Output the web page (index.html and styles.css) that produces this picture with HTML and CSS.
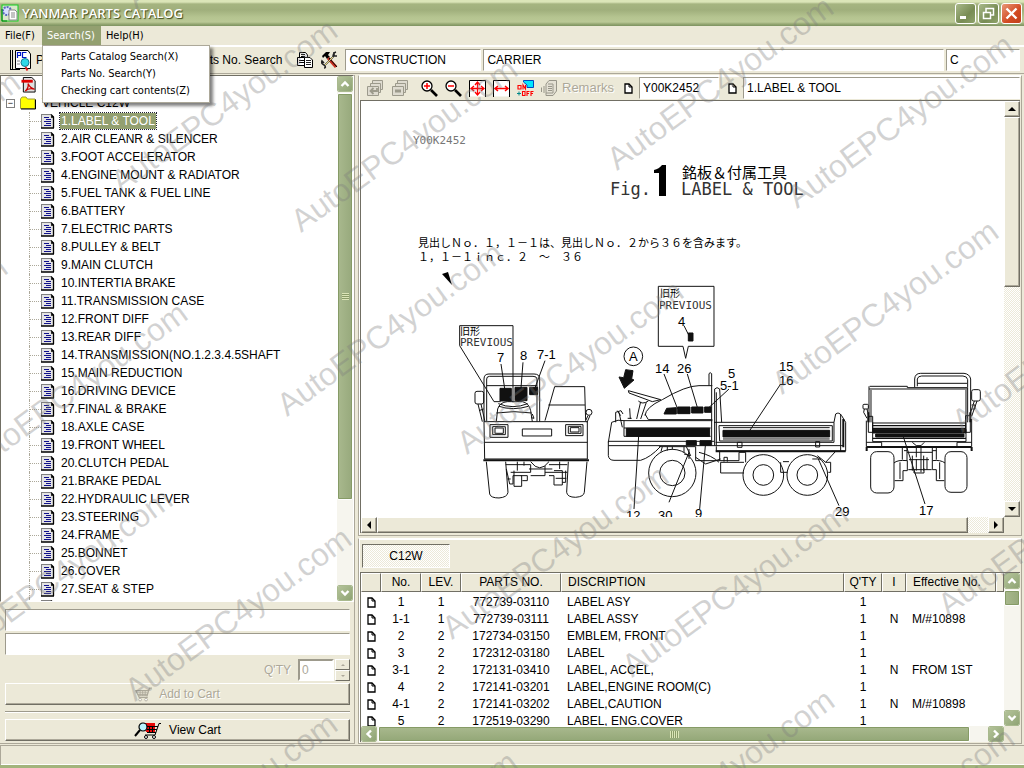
FILE: index.html
```html
<!DOCTYPE html>
<html lang="en">
<head>
<meta charset="utf-8">
<title>YANMAR PARTS CATALOG</title>
<link rel="stylesheet" href="styles.css">
</head>
<body>
<svg class="symbols" aria-hidden="true">
  <symbol id="doc" viewBox="0 0 14 15">
    <path d="M0 0H10L13 3V14H0Z" fill="#e4e4e4"/>
    <path d="M0 .5H10M.5 0V14" stroke="#808080" fill="none"/>
    <path d="M10 .5L12.500 3V14M0 14H13M10 3H13" stroke="#000" stroke-width="1.300" fill="none"/>
    <path d="M3 3.500H8M5 5.500H10M3 7.500H10M5 9.500H10M3 11.500H10" stroke="#10108c" fill="none"/>
  </symbol>
  <symbol id="page" viewBox="0 0 9 11">
    <path d="M1 1H5L8 4V10H1Z" fill="#fff" stroke="#000" stroke-width="1.300"/>
    <path d="M5 1V4H8" fill="none" stroke="#000"/>
  </symbol>
  <symbol id="up" viewBox="0 0 10 10"><path d="M1.500 7L5 3.500L8.500 7" fill="none" stroke="#fff" stroke-width="2.400"/></symbol>
  <symbol id="down" viewBox="0 0 10 10"><path d="M1.500 3L5 6.500L8.500 3" fill="none" stroke="#fff" stroke-width="2.400"/></symbol>
  <symbol id="left" viewBox="0 0 10 10"><path d="M7 1.500L3.500 5L7 8.500" fill="none" stroke="#fff" stroke-width="2.400"/></symbol>
  <symbol id="right" viewBox="0 0 10 10"><path d="M3 1.500L6.500 5L3 8.500" fill="none" stroke="#fff" stroke-width="2.400"/></symbol>
  <symbol id="cart" viewBox="0 0 20 17">
    <path d="M1 4H16L14 10H4ZM4 10L5 12H15M20 1H17L14 11" fill="none" stroke="currentColor" stroke-width="1.300"/>
    <path d="M2 6.500H15M3 8.500H14M6 4V10M9 4V10M12 4V10" stroke="currentColor" fill="none"/>
    <circle cx="6" cy="14.500" r="1.600" fill="#fff" stroke="currentColor"/><circle cx="13" cy="14.500" r="1.600" fill="#fff" stroke="currentColor"/>
  </symbol>
</svg>

<header class="titlebar">
  <svg class="app-icon" width="18" height="18" viewBox="0 0 18 18"><rect x="1" y="1" width="16" height="16" fill="#d8e8c8" stroke="#10d020"/><circle cx="6" cy="7" r="4" fill="#d8e0ff" stroke="#5868c0" stroke-width="2" stroke-dasharray="2 1"/><path d="M8 6H14L16 8V16H8Z" fill="#fff" stroke="#888"/><path d="M10 9H14M10 11H14M10 13H14" stroke="#888"/><path d="M1 5V17H6" fill="none" stroke="#008010"/></svg>
  <h1 class="title">YANMAR PARTS CATALOG</h1>
  <div class="win-buttons">
    <button class="win" aria-label="Minimize"><svg width="19" height="19" viewBox="0 0 19 19"><path d="M4 13.500H10" stroke="#fff" stroke-width="3"/></svg></button>
    <button class="win" aria-label="Restore"><svg width="19" height="19" viewBox="0 0 19 19"><path d="M7 8V4.500H14.500V11H12M4.500 8.500H11.500V14.500H4.500Z" fill="none" stroke="#fff" stroke-width="1.500"/></svg></button>
    <button class="win close" aria-label="Close"><svg width="19" height="19" viewBox="0 0 19 19"><path d="M4.500 4.500L14.500 14.500M14.500 4.500L4.500 14.500" stroke="#fff" stroke-width="2.400"/></svg></button>
  </div>
</header>

<nav class="menubar">
  <button class="menu">File(F)</button>
  <div class="menu-wrap">
    <button class="menu open" aria-expanded="true">Search(S)</button>
    <div class="popup" role="menu">
      <button role="menuitem">Parts Catalog Search(X)</button>
      <button role="menuitem">Parts No. Search(Y)</button>
      <button role="menuitem">Checking cart contents(Z)</button>
    </div>
  </div>
  <button class="menu">Help(H)</button>
</nav>

<div class="toolbar">
  <button class="tool catalog">
    <svg width="22" height="21" viewBox="0 0 22 21"><path d="M.500 0V19M2.500 0V19.500M0 19.500H10" stroke="#000" fill="none"/><path d="M5.500 .5H18L20.500 4V18.500H5.500Z" fill="#fff" stroke="#000"/><path d="M7.500 8V2.500H10.500V5.500H7.500M16.500 2.500H12.500V7.500H16.500" fill="none" stroke="#0018c8" stroke-width="1.200"/><circle cx="15" cy="12.500" r="4" fill="#30d8e8" stroke="#187890"/><path d="M15.500 17L17.500 20.500" stroke="#e02020" stroke-width="2"/><path d="M7 11H10M7 14H10" stroke="#888"/></svg>
    <span>Parts Catalog Search</span>
  </button>
  <button class="tool">Parts No. Search</button>
  <button class="tool icon" aria-label="Print"><svg width="17" height="17" viewBox="0 0 17 17"><path d="M2.500 6V.5H8.500L10.500 3V6M.5 5.500H9.500V13.500H.5Z" fill="#fff" stroke="#000"/><path d="M4 2.500H8M4 4.500H8M2 8.500H7M2 10.500H7" stroke="#000"/><path d="M7.500 5.500H13L15.500 8V15.500H7.500Z" fill="#fff" stroke="#000"/><path d="M9 8.500H14M9 10.500H14M9 12.500H14" stroke="#222"/></svg></button>
  <button class="tool icon" aria-label="Tools"><svg width="18" height="18" viewBox="0 0 18 18"><path d="M1 5L5 1L9 1L7 4L9 6L6 8L4 5L2 7Z" fill="#000"/><path d="M7 7L15 16" stroke="#c83020" stroke-width="3"/><path d="M8 7L16 16" stroke="#000"/><path d="M13 1V5L16 5M3 15L12 6Q12 2 15 1M3 14Q0 13 1 10L3 12M4 15Q5 17 3 17" fill="none" stroke="#222" stroke-width="1.600"/><path d="M4 14L12 6" stroke="#e8d878"/></svg></button>
  <div class="search-fields">
    <input aria-label="Division" value="CONSTRUCTION">
    <input aria-label="Machine" value="CARRIER">
    <input aria-label="Model" value="C">
  </div>
</div>

<main class="main">
  <section class="side">
    <div class="tree-box">
      <ul class="tree">
        <li class="root pdf"><svg width="16" height="17" viewBox="0 0 16 17"><path d="M2 .5H11L14.500 4V16H2Z" fill="#e0e0e0" stroke="#000"/><path d="M0 3H12V6H0Z" fill="#e00000"/><path d="M4 15Q8 11 7 7Q9 12 14 13Q8 11 4 15" fill="none" stroke="#c00" stroke-width="1.300"/></svg><a href="#">PDF</a></li>
        <li class="root"><button class="twist" aria-label="Collapse">−</button><svg width="16" height="13" viewBox="0 0 16 13"><path d="M.5 2.500L2 .5H6L7.500 2.500H15V12H.5Z" fill="#ff0" stroke="#a0a040"/><path d="M1 12.500H15.500V3" fill="none" stroke="#000"/></svg><a href="#">VEHICLE C12W</a></li>
        <li class="selected"><svg><use href="#doc"/></svg><a href="#">1.LABEL &amp; TOOL</a></li>
        <li><svg><use href="#doc"/></svg><a href="#">2.AIR CLEANR &amp; SILENCER</a></li>
        <li><svg><use href="#doc"/></svg><a href="#">3.FOOT ACCELERATOR</a></li>
        <li><svg><use href="#doc"/></svg><a href="#">4.ENGINE MOUNT &amp; RADIATOR</a></li>
        <li><svg><use href="#doc"/></svg><a href="#">5.FUEL TANK &amp; FUEL LINE</a></li>
        <li><svg><use href="#doc"/></svg><a href="#">6.BATTERY</a></li>
        <li><svg><use href="#doc"/></svg><a href="#">7.ELECTRIC PARTS</a></li>
        <li><svg><use href="#doc"/></svg><a href="#">8.PULLEY &amp; BELT</a></li>
        <li><svg><use href="#doc"/></svg><a href="#">9.MAIN CLUTCH</a></li>
        <li><svg><use href="#doc"/></svg><a href="#">10.INTERTIA BRAKE</a></li>
        <li><svg><use href="#doc"/></svg><a href="#">11.TRANSMISSION CASE</a></li>
        <li><svg><use href="#doc"/></svg><a href="#">12.FRONT DIFF</a></li>
        <li><svg><use href="#doc"/></svg><a href="#">13.REAR DIFF</a></li>
        <li><svg><use href="#doc"/></svg><a href="#">14.TRANSMISSION(NO.1.2.3.4.5SHAFT</a></li>
        <li><svg><use href="#doc"/></svg><a href="#">15.MAIN REDUCTION</a></li>
        <li><svg><use href="#doc"/></svg><a href="#">16.DRIVING DEVICE</a></li>
        <li><svg><use href="#doc"/></svg><a href="#">17.FINAL &amp; BRAKE</a></li>
        <li><svg><use href="#doc"/></svg><a href="#">18.AXLE CASE</a></li>
        <li><svg><use href="#doc"/></svg><a href="#">19.FRONT WHEEL</a></li>
        <li><svg><use href="#doc"/></svg><a href="#">20.CLUTCH PEDAL</a></li>
        <li><svg><use href="#doc"/></svg><a href="#">21.BRAKE PEDAL</a></li>
        <li><svg><use href="#doc"/></svg><a href="#">22.HYDRAULIC LEVER</a></li>
        <li><svg><use href="#doc"/></svg><a href="#">23.STEERING</a></li>
        <li><svg><use href="#doc"/></svg><a href="#">24.FRAME</a></li>
        <li><svg><use href="#doc"/></svg><a href="#">25.BONNET</a></li>
        <li><svg><use href="#doc"/></svg><a href="#">26.COVER</a></li>
        <li><svg><use href="#doc"/></svg><a href="#">27.SEAT &amp; STEP</a></li>
        <li><svg><use href="#doc"/></svg></li>
      </ul>
      <div class="xp-scroll vertical">
        <button class="arrow" aria-label="Scroll up"><svg><use href="#up"/></svg></button>
        <div class="thumb tree-thumb"><i class="grip"></i></div>
        <div class="spacer"></div>
        <button class="arrow" aria-label="Scroll down"><svg><use href="#down"/></svg></button>
      </div>
    </div>
    <div class="cart">
      <input class="field" aria-label="Part number">
      <input class="field" aria-label="Part name">
      <div class="qty">
        <label for="qty">Q'TY</label>
        <input id="qty" value="0" disabled>
        <div class="spin"><button disabled aria-label="Increase"><i class="tri-up"></i></button><button disabled aria-label="Decrease"><i class="tri-down"></i></button></div>
      </div>
      <button class="wide" disabled><svg width="17" height="15"><use href="#cart"/></svg>Add to Cart</button>
      <hr>
      <button class="wide"><svg width="28" height="17" viewBox="0 0 28 17"><path d="M10 1H21V10H12Z" fill="#e80808"/><path d="M12 4.500H24M13 7.500H23M13 10.500H22M27 1.500H25L21 13H11M15.500 4V11M18.500 4V11" fill="none" stroke="#000"/><circle cx="12" cy="15" r="1.500" fill="#fff" stroke="#000"/><circle cx="20" cy="15" r="1.500" fill="#fff" stroke="#000"/><path d="M1 14L6 8" stroke="#000" stroke-width="2"/><circle cx="9" cy="5" r="4" fill="#b8f4ff" stroke="#000" stroke-width="1.200"/></svg>View Cart</button>
    </div>
  </section>

  <div class="content">
    <section class="viewer">
      <div class="view-tools">
        <div class="icons">
          <button disabled aria-label="Previous figure"><svg width="17" height="17" viewBox="0 0 17 17"><path d="M5.500 3V.5H15.500V9.500H13M3.500 6V3.500H13.500V12.500H11.500M.5 6.500H11.500V15.500H.5Z" fill="#dedbd0" stroke="#9c9a8c"/><path d="M10 8V11H4M6.500 8L3.500 11L6.500 14" fill="none" stroke="#9c9a8c" stroke-width="1.800"/></svg></button>
          <button disabled aria-label="Next figure"><svg width="17" height="17" viewBox="0 0 17 17"><path d="M5.500 3V.5H15.500V9.500H13M3.500 6V3.500H13.500V12.500H11.500M.5 6.500H11.500V15.500H.5Z" fill="#dedbd0" stroke="#9c9a8c"/><path d="M3 11H9" stroke="#9c9a8c" stroke-width="3"/></svg></button>
          <button aria-label="Zoom in"><svg width="17" height="17" viewBox="0 0 17 17"><circle cx="6" cy="6" r="5" fill="#fff" stroke="#000" stroke-width="1.300"/><path d="M3 6H9M6 3V9" stroke="#f00" stroke-width="1.500"/><path d="M10 10L16 16" stroke="#000" stroke-width="2.600"/></svg></button>
          <button aria-label="Zoom out"><svg width="17" height="17" viewBox="0 0 17 17"><circle cx="6" cy="6" r="5" fill="#fff" stroke="#000" stroke-width="1.300"/><path d="M3 6H9" stroke="#f00" stroke-width="1.500"/><path d="M10 10L16 16" stroke="#000" stroke-width="2.600"/></svg></button>
          <button aria-label="Fit page"><svg width="17" height="17" viewBox="0 0 17 17"><path d="M.5 .5H16.500V16.500H.5Z" fill="#fff"/><path d="M.5 17V.5H16.500V17" fill="none" stroke="#000"/><path d="M2 8.500H15M8.500 2V15M5 6L2 8.500L5 11M12 6L15 8.500L12 11M6 5L8.500 2L11 5M6 12L8.500 15L11 12" fill="none" stroke="#f00" stroke-width="1.300"/></svg></button>
          <button aria-label="Fit width"><svg width="17" height="17" viewBox="0 0 17 17"><path d="M.5 .5H16.500V16.500H.5Z" fill="#fff"/><path d="M.5 17V.5H16.500V17" fill="none" stroke="#000"/><path d="M2 8.500H15M5 6L2 8.500L5 11M12 6L15 8.500L12 11" fill="none" stroke="#f00" stroke-width="1.500"/></svg></button>
          <button aria-label="Balloons on or off"><svg width="17" height="17" viewBox="0 0 17 17"><path d="M6.500 .5H16.500V7.500H10V5L6.500 2Z" fill="#00e8ff" stroke="#0048c0"/><path d="M1 5.500H4V9H1ZM6 9.500V5L8.500 9V5M5.500 11.500H8V15.500H5.500ZM10 16V11.500H12.500M10 13.500H12M14 16V11.500H16.500M14 13.500H16" fill="none" stroke="#f00" stroke-width="1.100"/><path d="M0 13.500H4M2 11.500V15.500" stroke="#088"/></svg></button>
        </div>
        <button class="remarks" disabled><svg width="17" height="17" viewBox="0 0 17 17"><path d="M5 4L8 .5H15.500V11L12 15.500H5Z" fill="#e4e1d4" stroke="#98968a"/><path d="M3 6V13M.5 7.500V12M7 4H12V13H5M7 6.500H11M7 8.500H11M7 10.500H11" fill="none" stroke="#98968a"/></svg>Remarks</button>
        <svg class="page-icon"><use href="#page"/></svg>
        <input class="code" aria-label="Figure code" value="Y00K2452">
        <svg class="page-icon"><use href="#page"/></svg>
        <input class="name" aria-label="Figure name" value="1.LABEL &amp; TOOL">
      </div>
      <div class="view-box">
        <div class="canvas">
          <svg class="drawing" width="643" height="416" viewBox="362 102 643 416">
            <g class="mono">
              <text x="414" y="145" font-size="11" fill="#777">Y00K2452</text>
              <text x="611" y="196" font-size="17">Fig.</text>
              <text x="682" y="196" font-size="17">LABEL &amp; TOOL</text>
              <text x="461" y="347" font-size="11">PREVIOUS</text>
              <text x="660" y="310" font-size="11">PREVIOUS</text>
            </g>
            <path d="M663 166H667V197H660V174H655V171Q660 170 663 166Z"/>
            <g class="jp">
              <text x="683" y="179" font-size="15">銘板＆付属工具</text>
              <text x="419" y="248" font-size="11">見出しＮｏ．１，１－１は、見出しＮｏ．２から３６を含みます。</text>
              <text x="419" y="262" font-size="11">１，１－１ｉｎｃ．２　～　３６</text>
              <text x="461" y="336" font-size="10">旧形</text>
              <text x="661" y="298" font-size="10">旧形</text>
            </g>
            <path d="M443 275L449 273L453 286Z"/>
            <!-- front view -->
            <g class="ink" transform="translate(440 280) scale(.3333)">
              <path d="M62 140H222V370M62 140V200L165 368H185"/>
              <path d="M135 428V300Q135 285 150 285H285Q302 285 302 300V428M143 428V300Q143 292 152 292H282Q294 292 294 300V428M143 320H294"/>
              <path class="solid" d="M183 328H217V366H183ZM228 325H264V365H228ZM272 325H296V347H272Z"/>
              <path d="M172 428L176 390Q182 370 205 368H250Q270 372 275 395L280 428M178 374Q222 392 266 374M180 382Q222 396 268 382M172 402Q225 394 278 402M280 405L285 418L276 416"/>
              <rect x="108" y="337" width="26" height="38" rx="6"/>
              <path d="M117 375L130 428M126 375L138 428M120 395L134 390"/>
              <path d="M318 425L347 323H437L440 425M328 378H438"/>
              <circle cx="450" cy="400" r="9"/><path d="M453 410L444 430M447 410L440 425"/>
              <path d="M135 428H445V540H137ZM137 490H445"/>
              <path d="M133 544H450" stroke-width="6"/>
              <path d="M153 437H207V475H153ZM161 443H199V467H161ZM168 447H193V463H168ZM250 450H338V471H250ZM380 437H432V470H380ZM388 442H426V463H388ZM394 446H420V459H394Z"/>
              <path d="M142 548L152 645Q155 657 180 657Q205 655 207 640L200 548M388 548L383 640Q385 655 410 655Q435 653 436 640L444 548"/>
              <path d="M200 557H275V580H215M318 580H385M330 557H385M275 548Q302 585 330 548M270 570H340M275 590H318V560M202 570L212 615H222V590H248V622H225V575M345 575H370V618H345V590H330M205 600H215M350 598H382M235 548V575M255 548V560M362 548V570M245 590H265V605H250M380 575V610H370"/>
              <path d="M186 255L198 335M252 250L245 340M318 245L285 335"/>
            </g>
            <!-- side view -->
            <g class="ink" transform="translate(600 280) scale(.3333)">
              <path d="M178 22H345V202H268L260 238L252 202H178ZM255 140L270 170"/>
              <path class="solid" d="M268 162H282V186H268Z"/>
              <circle cx="103" cy="232" r="28"/>
              <path class="solid" d="M80 272L102 275L98 300L105 303L76 328L60 294L74 296Z"/>
              <circle cx="220" cy="582" r="71"/><circle cx="220" cy="582" r="38"/>
              <circle cx="493" cy="588" r="61"/><circle cx="493" cy="588" r="31"/>
              <circle cx="625" cy="588" r="61"/><circle cx="625" cy="588" r="31"/>
              <path d="M88 335L185 362L160 368L90 342ZM125 368L113 420M142 370L125 420M118 366Q130 378 148 366"/>
              <path d="M138 410Q140 385 190 362Q260 320 300 320H340M138 405L148 422H340M338 320V500M330 320V284Q333 278 338 284V320M347 500V330Q354 322 362 330L368 430M352 340V500"/>
              <path class="solid" d="M195 405L203 388L232 386V405ZM236 384H273V404H236ZM278 384H312V402H278ZM317 384H336V400H317ZM262 485H292V498H262ZM303 485H336V499H303Z"/>
              <path d="M28 490L38 430Q58 420 75 425H340M75 447H335M75 425V472M75 472H335M28 487H345M28 500H345M28 487V530Q30 544 45 544H125Q155 535 185 502M50 430V400L66 395L72 405M60 400L70 445M92 388L94 420M86 418H98M55 395L65 410"/>
              <path class="solid" d="M82 448H332V472H82ZM372 454H692V474H372Z"/>
              <path d="M345 430H705V490H350M360 440H700V486H362ZM372 446H692M372 480H692M345 500H735M352 502V516H740V430M705 430L710 405Q720 398 728 410L740 430M725 405V516M415 490H429V505H415ZM650 488H662V504H650Z"/>
              <path d="M350 517H740M733 420V505" stroke-width="6"/>
              <path d="M180 503H290V545M190 503L186 518M205 503V515M220 503V512M262 503L275 530L255 525M290 545H420V520H440V550M365 550V582H435M365 550H435M290 535L320 555L365 540M300 520Q340 530 360 550M375 548V535H385V548M362 517V545M552 548H570M680 550H695V580H688M710 517L680 550L655 530M640 540H665M255 503V520M270 510V540M545 550V580H565"/>
              <path d="M195 285L236 390M265 285L295 385M390 330L325 390M120 455L105 690M320 490L302 690M270 520L210 670M545 315L452 455M658 540L720 680"/>
            </g>
            <!-- rear view -->
            <g class="ink" transform="translate(830 280) scale(.3333)">
              <path d="M257 325V300Q258 283 275 283H405Q422 285 425 300V410M265 322V300Q267 291 278 291H402Q415 292 416 302V325M265 313H414"/>
              <path d="M122 322H235V326H416V430M120 330H416M120 322V430M126 333V430M411 333V430"/>
              <rect x="102" y="376" width="16" height="14" rx="3"/><path d="M106 390L104 400L114 418M114 390L120 415"/>
              <rect x="428" y="332" width="26" height="34" rx="6"/><path d="M444 366L428 412M436 366L422 410M428 378H438V390H430"/>
              <path d="M118 412H131V460H118ZM410 410H424V460H410ZM112 425V503M428 420V503M131 430V488H411V430M131 432H411M112 490H158V503M384 503V490H428"/>
              <path d="M131 440H411M131 478H411M131 448H411" stroke-width="4"/>
              <path class="solid" d="M131 451H411V462H131ZM140 465H405V474H140Z"/>
              <path d="M112 504H428M118 400V430M424 400V430M428 504V516M113 504V516" stroke-width="6"/>
              <rect x="125" y="518" width="70" height="124" rx="18"/><rect x="348" y="518" width="66" height="122" rx="18"/>
              <path d="M195 552Q205 542 235 545V575H222V605H197M348 552Q335 542 310 545V572H322V605H346M213 550V600M332 550V600M220 507V542M234 507V545M310 507V545M322 507V542M234 520H310M250 490L262 500H276L286 490M262 500V535M276 500V580M240 542H300M238 572H308M255 572V582H285V568M250 530V575M262 540V575M284 530V575M294 535V572M225 515H234M310 515H322"/>
              <path d="M222 470L288 675"/>
            </g>
            <g class="callouts">
              <text x="498" y="363">7</text><text x="521" y="361">8</text><text x="538" y="360">7-1</text>
              <text x="679" y="327">4</text><text x="656" y="374">14</text><text x="678" y="374">26</text>
              <text x="729" y="379">5</text><text x="721" y="391">5-1</text><text x="780" y="372">15</text><text x="780" y="386">16</text>
              <text x="630" y="362">A</text><text x="627" y="521">12</text><text x="659" y="521">30</text><text x="696" y="519">9</text>
              <text x="836" y="517">29</text><text x="920" y="516">17</text>
            </g>
          </svg>
        </div>
        <div class="classic vertical">
          <button aria-label="Scroll up"><i class="tri-up"></i></button><div class="block view-v"></div><div class="spacer"></div><button aria-label="Scroll down"><i class="tri-down"></i></button>
        </div>
        <div class="classic horizontal">
          <button aria-label="Scroll left"><i class="tri-left"></i></button><div class="block view-h"></div><div class="rest"></div><button aria-label="Scroll right"><i class="tri-right"></i></button>
        </div>
        <div class="corner"></div>
      </div>
    </section>

    <section class="parts">
      <button class="tab" aria-pressed="true">C12W</button>
      <div class="parts-box">
        <div class="table-clip">
          <table>
            <colgroup><col class="c-icon"><col class="c-no"><col class="c-no"><col class="c-part"><col><col class="c-qty"><col class="c-i"><col class="c-eff"><col class="c-end"></colgroup>
            <thead><tr><th></th><th>No.</th><th>LEV.</th><th>PARTS NO.</th><th class="l">DISCRIPTION</th><th>Q'TY</th><th>I</th><th class="l">Effective No.</th><th></th></tr></thead>
            <tbody>
              <tr><td><svg><use href="#page"/></svg></td><td>1</td><td>1</td><td>772739-03110</td><td class="l">LABEL ASY</td><td>1</td><td></td><td class="l"></td><td></td></tr>
              <tr><td><svg><use href="#page"/></svg></td><td>1-1</td><td>1</td><td>772739-03111</td><td class="l">LABEL ASSY</td><td>1</td><td>N</td><td class="l">M/#10898</td><td></td></tr>
              <tr><td><svg><use href="#page"/></svg></td><td>2</td><td>2</td><td>172734-03150</td><td class="l">EMBLEM, FRONT</td><td>1</td><td></td><td class="l"></td><td></td></tr>
              <tr><td><svg><use href="#page"/></svg></td><td>3</td><td>2</td><td>172312-03180</td><td class="l">LABEL</td><td>1</td><td></td><td class="l"></td><td></td></tr>
              <tr><td><svg><use href="#page"/></svg></td><td>3-1</td><td>2</td><td>172131-03410</td><td class="l">LABEL, ACCEL,</td><td>1</td><td>N</td><td class="l">FROM 1ST</td><td></td></tr>
              <tr><td><svg><use href="#page"/></svg></td><td>4</td><td>2</td><td>172141-03201</td><td class="l">LABEL,ENGINE ROOM(C)</td><td>1</td><td></td><td class="l"></td><td></td></tr>
              <tr><td><svg><use href="#page"/></svg></td><td>4-1</td><td>2</td><td>172141-03202</td><td class="l">LABEL,CAUTION</td><td>1</td><td>N</td><td class="l">M/#10898</td><td></td></tr>
              <tr><td><svg><use href="#page"/></svg></td><td>5</td><td>2</td><td>172519-03290</td><td class="l">LABEL, ENG.COVER</td><td>1</td><td></td><td class="l"></td><td></td></tr>
            </tbody>
          </table>
        </div>
        <div class="xp-scroll vertical">
          <button class="arrow" aria-label="Scroll up"><svg><use href="#up"/></svg></button>
          <div class="thumb small-thumb"></div><div class="spacer"></div>
          <button class="arrow" aria-label="Scroll down"><svg><use href="#down"/></svg></button>
        </div>
        <div class="xp-scroll horizontal">
          <button class="arrow" aria-label="Scroll left"><svg><use href="#left"/></svg></button>
          <div class="thumb wide-thumb"><i class="grip"></i></div><div class="rest"></div>
          <button class="arrow" aria-label="Scroll right"><svg><use href="#right"/></svg></button>
        </div>
        <div class="corner"></div>
      </div>
    </section>
  </div>
</main>
<footer class="status"></footer>

<svg class="watermark" width="1024" height="768" aria-hidden="true">
  <text transform="translate(617 171) rotate(-36)">AutoEPC4you.com</text>
  <text transform="translate(797 209) rotate(-36)">AutoEPC4you.com</text>
  <text transform="translate(301 233) rotate(-36)">AutoEPC4you.com</text>
  <text transform="translate(121 194) rotate(-36)">AutoEPC4you.com</text>
  <text transform="translate(136 10) rotate(-36)">AutoEPC4you.com</text>
  <text transform="translate(287 417) rotate(-36)">AutoEPC4you.com</text>
  <text transform="translate(467 455) rotate(-36)">AutoEPC4you.com</text>
  <text transform="translate(782 395) rotate(-36)">AutoEPC4you.com</text>
  <text transform="translate(962 433) rotate(-36)">AutoEPC4you.com</text>
  <text transform="translate(-196 246) rotate(-36)">AutoEPC4you.com</text>
  <text transform="translate(-209 431) rotate(-36)">AutoEPC4you.com</text>
  <text transform="translate(-29 477) rotate(-36)">AutoEPC4you.com</text>
  <text transform="translate(-44 663) rotate(-36)">AutoEPC4you.com</text>
  <text transform="translate(135 702) rotate(-36)">AutoEPC4you.com</text>
  <text transform="translate(452 640) rotate(-36)">AutoEPC4you.com</text>
  <text transform="translate(632 678) rotate(-36)">AutoEPC4you.com</text>
  <text transform="translate(948 617) rotate(-36)">AutoEPC4you.com</text>
  <text transform="translate(121 888) rotate(-36)">AutoEPC4you.com</text>
  <text transform="translate(301 926) rotate(-36)">AutoEPC4you.com</text>
  <text transform="translate(618 864) rotate(-36)">AutoEPC4you.com</text>
  <text transform="translate(798 902) rotate(-36)">AutoEPC4you.com</text>
</svg>
</body>
</html>
```
FILE: styles.css
```css
* { box-sizing: border-box; }
html, body { height: 100%; }
body {
  margin: 0;
  position: relative;
  display: flex;
  flex-direction: column;
  overflow: hidden;
  background: #ece9d8;
  color: #000;
  font: 12px/18px "Liberation Sans", Arial, sans-serif;
}
button, input { font: inherit; color: inherit; border-radius: 0; }
button { padding: 0; border: 0; background: none; }
svg { display: block; flex: none; }
.symbols { position: absolute; width: 0; height: 0; }

/* title bar */
.titlebar {
  display: flex;
  align-items: center;
  gap: 3px;
  height: 26px;
  padding: 0 2px 0 1px;
  background: linear-gradient(#dbe5b8 0, #dbe5b8 2px, #a5b480 4px, #a0af7c 10px, #b5c490 17px, #bac896 22px, #96a873 24px, #7d9160 26px);
}
.title {
  flex: 1;
  margin: 0;
  color: #fff;
  font: 600 13px/24px "Open Sans", "Noto Sans", sans-serif;
  text-shadow: 1px 1px 1px #3c4a1c;
}
.win-buttons { display: flex; gap: 2px; }
.win {
  width: 21px;
  height: 21px;
  border: 1px solid #fff;
  border-radius: 3px;
  background: linear-gradient(135deg, #a9b98a, #788c54 60%, #8fa36a);
}
.win.close { background: linear-gradient(135deg, #e89878, #d24a22 60%, #c0401c); }

/* menu */
.menubar {
  display: flex;
  height: 21px;
  border-bottom: 2px solid #fff;
  font: 11px/19px "DejaVu Sans Condensed", "DejaVu Sans", Tahoma, sans-serif;
}
.menu { height: 19px; padding: 0 6px 0 5px; }
.menu-wrap { position: relative; margin-left: 1px; }
.menu.open { background: #93a070; color: #fff; }
.popup {
  position: absolute;
  z-index: 5;
  top: 19px;
  left: 0;
  display: flex;
  flex-direction: column;
  width: 168px;
  padding: 2px 0 3px;
  border: 1px solid #aca899;
  background: #fff;
  box-shadow: 3px 3px 3px rgba(0, 0, 0, .5);
  line-height: 17px;
}
.popup button { height: 17px; padding-left: 18px; text-align: left; white-space: nowrap; }

/* main toolbar */
.toolbar {
  display: flex;
  align-items: center;
  height: 27px;
  padding: 0 4px 0 10px;
  border-bottom: 1px solid #aca899;
}
.tool { display: flex; align-items: center; gap: 4px; white-space: nowrap; }
.tool.catalog { width: 181px; }
.tool + .tool.icon { margin-left: 15px; }
.tool.icon + .tool.icon { margin-left: 7px; }
.search-fields {
  flex: 1;
  display: grid;
  grid-template-columns: 136px 1fr 74px;
  gap: 2px;
  margin-left: 6px;
}
input {
  min-width: 0;
  width: 100%;
  height: 22px;
  padding: 0 3px;
  border: 1px solid;
  border-color: #9d9a8c #fff #fff #9d9a8c;
  background: #fff;
}

/* two columns */
.main { flex: 1; display: flex; gap: 3px; min-height: 0; padding: 1px 2px 0 0; }
.side {
  flex: none;
  display: flex;
  flex-direction: column;
  width: 355px;
  border-right: 1px solid #aca899;
  border-bottom: 1px solid #aca899;
}
.tree-box {
  flex: 1;
  display: flex;
  min-height: 0;
  border: 1px solid;
  border-color: #716f64 #fff #fff #716f64;
  background: #fff;
}
.tree {
  flex: 1;
  margin: 0;
  padding: 0 0 0 28px;
  overflow: hidden;
  list-style: none;
  white-space: nowrap;
}
.tree li {
  display: flex;
  align-items: center;
  height: 18px;
  border-left: 1px dotted #aca899;
}
.tree li::before { content: ""; width: 11px; border-top: 1px dotted #aca899; }
.tree li svg { width: 14px; height: 15px; }
.tree a { margin-left: 5px; padding: 0 1px; color: inherit; line-height: 16px; text-decoration: none; }
.tree .selected a { outline: 1px dotted #223; background: #93a070; color: #fff; }
.tree .root { margin-left: -20px; border: 0; }
.tree .root.pdf { margin-left: -19px; }
.tree .root::before { display: none; }
.tree .root svg { width: 16px; height: 16px; margin-left: 5px; }
.tree .root.pdf svg { margin-left: 11px; }
.twist {
  width: 9px;
  height: 9px;
  margin-left: -3px;
  border: 1px solid #808080;
  background: #fff;
  font-size: 9px;
  line-height: 7px;
}

/* green scroll bars */
.xp-scroll { display: flex; flex: none; background: #f6f5ee; }
.xp-scroll.vertical { flex-direction: column; width: 16px; }
.xp-scroll .arrow {
  display: grid;
  place-items: center;
  flex: none;
  width: 16px;
  height: 16px;
  border: 1px solid #fff;
  border-radius: 2px;
  outline: 1px solid #a9b98e;
  outline-offset: -1px;
  background: linear-gradient(135deg, #b4c39a, #8fa474);
}
.xp-scroll .arrow svg { width: 10px; height: 10px; }
.thumb {
  display: grid;
  place-items: center;
  flex: none;
  border: 1px solid #fff;
  border-radius: 2px;
  outline: 1px solid #869b66;
  outline-offset: -2px;
  background: linear-gradient(90deg, #a9b98e, #97a97c);
}
.vertical .thumb { width: 16px; margin-top: 1px; }
.tree-thumb { height: 407px; }
.small-thumb { height: 16px; }
.horizontal .thumb { height: 16px; margin-left: 1px; background: linear-gradient(#a9b98e, #93a777); }
.wide-thumb { flex: 1; }
.grip { width: 7px; height: 7px; background: repeating-linear-gradient(#dbe5b8 0 1px, #8a9c68 1px 2px); }
.horizontal .grip { width: 9px; background: repeating-linear-gradient(90deg, #dbe5b8 0 1px, #8a9c68 1px 2px); }
.spacer { flex: 1; }
.rest { flex: none; width: 18px; }

/* cart */
.cart { display: flex; flex-direction: column; padding: 7px 4px 2px 5px; }
.field { margin-bottom: 2px; }
.qty { display: flex; align-items: center; justify-content: flex-end; height: 26px; gap: 1px; color: #aca899; text-shadow: 1px 1px #fff; }
.qty label { margin-right: 6px; }
.qty input { width: 36px; padding: 0 2px; border: 2px solid; border-color: #9d9a8c #fff #fff #9d9a8c; }
.spin { display: flex; flex-direction: column; }
.spin button { display: grid; place-items: center; width: 15px; height: 11px; }
.wide, .spin button, .classic button, .block, th {
  border: 1px solid;
  border-color: #fff #716f64 #716f64 #fff;
  background: #ece9d8;
}
.wide {
  display: flex;
  align-items: center;
  justify-content: center;
  gap: 7px;
  height: 22px;
  box-shadow: inset -1px -1px #aca899;
}
.wide:disabled { color: #aca899; text-shadow: 1px 1px #fff; }
hr { width: 100%; margin: 6px 0; border: 0; border-top: 1px solid #9d9a8c; border-bottom: 1px solid #fff; }

/* right side */
.content { flex: 1; display: flex; flex-direction: column; gap: 2px; min-width: 0; }
.viewer, .parts { display: flex; flex-direction: column; border: 1px solid #aca899; border-top-color: #fff; box-shadow: inset 1px 1px #fff; }
.viewer { flex: 1; min-height: 0; padding: 0 1px 2px; }
.view-tools { display: flex; align-items: center; flex: none; height: 24px; padding-left: 7px; }
.icons { display: flex; gap: 7px; margin-right: 7px; }
.icons button:nth-child(2) { margin-right: 5px; }
.icons button:first-child { margin-right: 1px; }
.remarks { display: flex; align-items: center; gap: 4px; width: 83px; font-size: 13px; color: #aca899; text-shadow: 1px 1px #fff; }
.page-icon { width: 9px; height: 11px; margin-right: 6px; }
.code { width: 80px; margin-right: 9px; }
.name { flex: 1; }
.view-box {
  flex: 1;
  display: grid;
  grid-template: minmax(0, 1fr) 16px / minmax(0, 1fr) 16px;
  min-height: 0;
  border-top: 1px solid #716f64;
  border-left: 1px solid #716f64;
}
.canvas { overflow: hidden; background: #fff; }
.corner { background: #ece9d8; }
.classic { display: flex; background: repeating-conic-gradient(#fff 0 25%, #ece9d8 0 50%) 0 0 / 2px 2px; }
.classic.vertical { flex-direction: column; }
.classic button { display: grid; place-items: center; flex: none; width: 16px; height: 16px; }
.classic button, .block { box-shadow: inset -1px -1px #aca899; }
.view-v { height: 170px; }
.view-h { flex: 1; }
.classic .rest { width: 20px; }
.tri-up, .tri-down { border: 4px solid transparent; border-top-width: 0; border-bottom: 4px solid currentColor; }
.tri-down { border-bottom-width: 0; border-top: 4px solid currentColor; }
.tri-left, .tri-right { border: 4px solid transparent; border-left-width: 0; border-right: 4px solid currentColor; }
.tri-right { border-right-width: 0; border-left: 4px solid currentColor; }
.spin i { border-left-width: 2px; border-right-width: 2px; }
.spin .tri-up { border-bottom-width: 2px; }
.spin .tri-down { border-top-width: 2px; }

.mono { fill: #333; font-family: "DejaVu Sans Mono", monospace; }
.jp { font-family: "Noto Sans CJK JP", sans-serif; }
.callouts { font: 13px "Liberation Sans", Arial, sans-serif; }
.ink { fill: none; stroke: #111; stroke-width: 3; }
.ink .solid { fill: #111; }

/* parts list */
.parts { flex: none; height: 206px; padding: 5px 1px 1px; }
.tab {
  width: 88px;
  height: 24px;
  margin: 0 0 4px 2px;
  border: 1px solid;
  border-color: #716f64 #fff #fff #716f64;
  background: repeating-conic-gradient(#fff 0 25%, #ece9d8 0 50%) 0 0 / 2px 2px;
}
.parts-box {
  flex: 1;
  display: grid;
  grid-template: minmax(0, 1fr) 16px / minmax(0, 1fr) 16px;
  min-height: 0;
  border-top: 1px solid #716f64;
  border-left: 1px solid #716f64;
}
.table-clip { overflow: hidden; background: #fff; }
table { width: 100%; table-layout: fixed; border-collapse: separate; border-spacing: 0; }
thead::after { content: ""; display: block; height: 2px; }
th, td { padding: 0; text-align: center; font-weight: 400; white-space: nowrap; }
th { height: 19px; line-height: 17px; }
td { height: 17px; line-height: 17px; }
td svg { width: 9px; height: 11px; margin: 0 auto; }
.l { padding-left: 6px; text-align: left; }
.c-icon { width: 20px; }
.c-no { width: 40px; }
.c-part { width: 100px; }
.c-qty { width: 38px; }
.c-i { width: 24px; }
.c-eff { width: 90px; }
.c-end { width: 8px; }

.status {
  flex: none;
  height: 23px;
  margin-top: 1px;
  border-top: 1px solid #aca899;
  border-bottom: 3px solid #a3b47c;
  box-shadow: inset 1px 0 #aca899, inset 0 -1px #fff;
}

.watermark {
  position: absolute;
  z-index: 10;
  inset: 0;
  overflow: hidden;
  pointer-events: none;
  fill: rgba(125, 125, 125, .34);
  font: 32px "Liberation Sans", Arial, sans-serif;
}
```
